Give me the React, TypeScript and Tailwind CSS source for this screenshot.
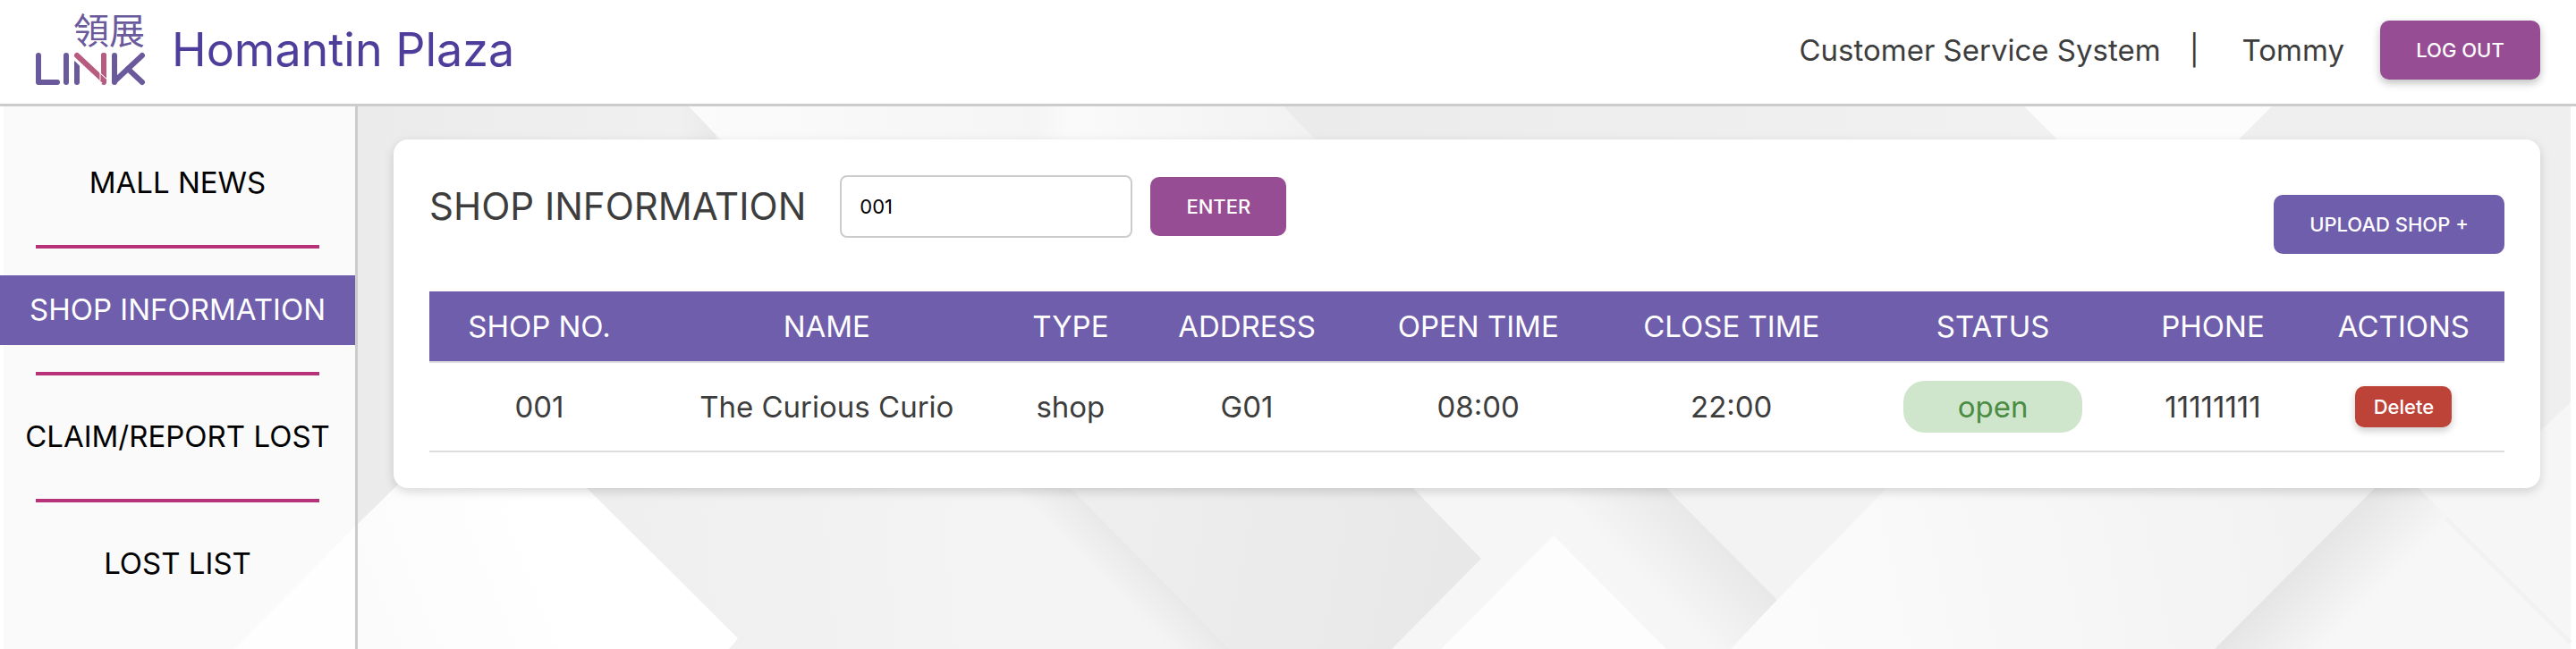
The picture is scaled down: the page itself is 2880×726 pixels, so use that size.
import { useState } from "react";

type Shop = {
  no: string;
  name: string;
  type: string;
  address: string;
  open: string;
  close: string;
  status: string;
  phone: string;
};

const navItems = ["MALL NEWS", "SHOP INFORMATION", "CLAIM/REPORT LOST", "LOST LIST"];

const columns = [
  { label: "SHOP NO.", width: "w-[10.6%]" },
  { label: "NAME", width: "w-[17.1%]" },
  { label: "TYPE", width: "w-[6.4%]" },
  { label: "ADDRESS", width: "w-[10.6%]" },
  { label: "OPEN TIME", width: "w-[11.7%]" },
  { label: "CLOSE TIME", width: "w-[12.7%]" },
  { label: "STATUS", width: "w-[12.5%]" },
  { label: "PHONE", width: "w-[8.7%]" },
  { label: "ACTIONS", width: "w-[9.7%]" },
];

const shops: Shop[] = [
  {
    no: "001",
    name: "The Curious Curio",
    type: "shop",
    address: "G01",
    open: "08:00",
    close: "22:00",
    status: "open",
    phone: "11111111",
  },
];

function LinkLogo() {
  return (
    <svg width="130" height="108" viewBox="0 -12 130 108" role="img" aria-label="領展 LINK" className="shrink-0">
      <text
        x="44"
        y="35"
        fontSize="40"
        fill="#6a5a9c"
        fontFamily="'Noto Sans CJK TC', sans-serif"
        lang="zh-Hant"
      >
        領展
      </text>
      <g stroke="#6a5a9c" strokeWidth="6" strokeLinecap="round" strokeLinejoin="round" fill="none">
        <polyline points="5,48 5,78 26,78" />
        <line x1="36" y1="48" x2="36" y2="78" />
        <line x1="48" y1="56" x2="48" y2="78" />
        <line x1="90" y1="48" x2="90" y2="78" />
        <line x1="121" y1="48" x2="90" y2="77" />
        <line x1="105" y1="63" x2="121" y2="78" />
      </g>
      <line x1="46" y1="49" x2="76" y2="79" stroke="#ffffff" strokeWidth="8" />
      <line x1="78" y1="48" x2="78" y2="78" stroke="#b85c7f" strokeWidth="6" strokeLinecap="round" />
      <line x1="48" y1="48" x2="78" y2="77" stroke="#ffffff" strokeWidth="8" />
      <line x1="48" y1="48" x2="78" y2="76" stroke="#b85c7f" strokeWidth="6" strokeLinecap="round" />
      <line x1="78" y1="48" x2="78" y2="66" stroke="#b85c7f" strokeWidth="6" strokeLinecap="round" />
      <line x1="74" y1="67" x2="74" y2="76" stroke="#ffffff" strokeWidth="1" />
      <line x1="73" y1="67" x2="82" y2="75" stroke="#ffffff" strokeWidth="1" />
    </svg>
  );
}

function Backdrop() {
  return (
    <svg
      aria-hidden="true"
      className="absolute inset-0 h-full w-full"
      viewBox="0 119 2880 607"
      preserveAspectRatio="none"
    >
      <defs>
        <linearGradient id="topLight" x1="0" x2="1" y1="0" y2="0">
          <stop offset="0" stopColor="#fbfbfb" />
          <stop offset="0.55" stopColor="#f5f5f5" />
          <stop offset="0.6" stopColor="#fafafa" />
          <stop offset="1" stopColor="#f1f1f1" />
        </linearGradient>
        <linearGradient id="topGrey" x1="0" x2="1" y1="0" y2="0">
          <stop offset="0" stopColor="#ebebeb" />
          <stop offset="1" stopColor="#f1f1f1" />
        </linearGradient>
        <linearGradient id="leftGrey" x1="0" x2="1" y1="0" y2="0">
          <stop offset="0" stopColor="#ebebeb" />
          <stop offset="0.9" stopColor="#f0f0f0" />
          <stop offset="1" stopColor="#e9e9e9" />
        </linearGradient>
        <linearGradient id="midGrey" gradientUnits="userSpaceOnUse" x1="700" y1="640" x2="1140" y2="600">
          <stop offset="0" stopColor="#efefef" />
          <stop offset="1" stopColor="#f4f4f4" />
        </linearGradient>
        <linearGradient id="shadeA" gradientUnits="userSpaceOnUse" x1="1252" y1="670" x2="1286" y2="636">
          <stop offset="0" stopColor="#e9e9e9" stopOpacity="0" />
          <stop offset="1" stopColor="#e9e9e9" />
        </linearGradient>
        <linearGradient id="darkA" gradientUnits="userSpaceOnUse" x1="1230" y1="560" x2="1640" y2="640">
          <stop offset="0" stopColor="#eeeeee" />
          <stop offset="1" stopColor="#e8e8e8" />
        </linearGradient>
        <linearGradient id="shadeB" gradientUnits="userSpaceOnUse" x1="1860" y1="673" x2="1925" y2="608">
          <stop offset="0" stopColor="#f6f6f6" />
          <stop offset="1" stopColor="#e8e8e8" />
        </linearGradient>
        <linearGradient id="panel" gradientUnits="userSpaceOnUse" x1="2000" y1="680" x2="2560" y2="560">
          <stop offset="0" stopColor="#fbfbfb" />
          <stop offset="1" stopColor="#f2f2f2" />
        </linearGradient>
        <linearGradient id="shadeC" gradientUnits="userSpaceOnUse" x1="2566" y1="636" x2="2626" y2="696">
          <stop offset="0" stopColor="#e5e5e5" />
          <stop offset="1" stopColor="#f7f7f7" />
        </linearGradient>
        <linearGradient id="whiteA" gradientUnits="userSpaceOnUse" x1="420" y1="700" x2="620" y2="620">
          <stop offset="0" stopColor="#fbfbfb" />
          <stop offset="1" stopColor="#ffffff" />
        </linearGradient>
      </defs>
      <rect x="4" y="119" width="2870" height="607" fill="#efefef" />
      <rect x="400" y="119" width="400" height="470" fill="url(#leftGrey)" />
      <polygon points="770,119 1435,119 1480,166 815,166" fill="url(#topLight)" />
      <polygon points="1435,119 2263,119 2310,166 1480,166" fill="url(#topGrey)" />
      <polygon points="2263,119 2540,119 2493,166 2310,166" fill="#fcfcfc" />
      <polygon points="650,540 1191,540 1375,726 815,726 825,714" fill="url(#midGrey)" />
      <polygon points="1100,540 1191,540 1375,726 1250,726" fill="url(#shadeA)" />
      <polygon points="1191,540 1574,540 1656,625 1556,726 1375,726" fill="url(#darkA)" />
      <polygon points="400,586 447,540 650,540 825,714 815,726 262,726" fill="url(#whiteA)" />
      <polygon points="1574,540 1857,540 1987,671 1935,726 1556,726 1656,625" fill="#f6f6f6" />
      <polygon points="1690,540 1857,540 1987,671 1935,726 1863,726" fill="url(#shadeB)" />
      <polygon points="1737,599 1863,726 1611,726" fill="#fdfdfd" />
      <polygon points="1857,540 2115,540 1987,671" fill="#f3f3f3" />
      <polygon points="2115,540 2661,540 2476,726 1935,726 1987,671" fill="url(#panel)" />
      <polygon points="2661,540 2698,540 2874,716 2874,726 2476,726" fill="url(#shadeC)" />
      <polygon points="2874,450 2874,716 2698,540 2800,520" fill="#f6f6f6" />
      <line x1="2735" y1="580" x2="2874" y2="719" stroke="#f2f2f2" strokeWidth="5" />
    </svg>
  );
}

export default function App() {
  const [query, setQuery] = useState("001");

  return (
    <div className="flex min-h-screen flex-col bg-white font-['Inter','Liberation_Sans',sans-serif] text-[#3d3d3d]">
      <header className="flex h-[119px] items-center justify-between border-b-3 border-[#cccccc] pr-10 pb-1 pl-[38px]">
        <div className="flex items-center gap-6">
          <LinkLogo />
          <h1 className="text-[52px] leading-none text-[#4f3d9b]">Homantin Plaza</h1>
        </div>
        <div className="flex items-center gap-10">
          <p className="flex items-center gap-8 text-[33px] leading-10">
            <span>Customer Service System</span>
            <span className="mr-4">|</span>
            <span>Tommy</span>
          </p>
          <button
            type="button"
            className="h-[66px] w-[179px] rounded-[10px] bg-[#974d94] text-[22px] font-medium text-white shadow-[0_4px_10px_rgba(0,0,0,0.25)]"
          >
            LOG OUT
          </button>
        </div>
      </header>

      <div className="relative flex flex-1">
        <Backdrop />
        <nav className="relative w-[400px] shrink-0 border-r-3 border-[#cccccc] bg-white/70 pt-[47px]">
          <ul>
            {navItems.map((item, index) => (
              <li key={item}>
                {index > 0 && <div className="mx-10 my-[30px] h-1 bg-[#b83279]" />}
                <a
                  href="#"
                  aria-current={item === "SHOP INFORMATION" ? "page" : undefined}
                  className={
                    item === "SHOP INFORMATION"
                      ? "flex h-[78px] items-center justify-center bg-[#6f5eab] text-[33px] whitespace-nowrap text-white"
                      : "flex h-[78px] items-center justify-center text-[33px] whitespace-nowrap text-black"
                  }
                >
                  {item}
                </a>
              </li>
            ))}
          </ul>
        </nav>

        <main className="relative flex-1 px-10 py-[37px]">
          <section className="rounded-2xl bg-white p-10 shadow-[0_4px_12px_rgba(0,0,0,0.15)]">
            <div className="mb-[42px] flex h-[88px] items-start justify-between">
              <form className="flex items-center gap-5" onSubmit={(event) => event.preventDefault()}>
                <h2 className="mr-[18px] text-[42px] leading-none whitespace-nowrap">SHOP INFORMATION</h2>
                <input
                  aria-label="Shop number"
                  value={query}
                  onChange={(event) => setQuery(event.target.value)}
                  className="h-[70px] w-[327px] rounded-lg border-2 border-[#cccccc] bg-white px-5 text-[22px] text-black"
                />
                <button
                  type="submit"
                  className="h-[66px] w-[152px] rounded-[10px] bg-[#974d94] text-[22px] font-medium text-white"
                >
                  ENTER
                </button>
              </form>
              <button
                type="button"
                className="h-[66px] w-[258px] self-end rounded-[10px] bg-[#6f5eab] text-[22px] font-medium text-white"
              >
                UPLOAD SHOP +
              </button>
            </div>

            <table className="w-full table-fixed border-separate border-spacing-0 text-center text-[33px] leading-10">
              <thead>
                <tr className="bg-[#6f5eab] text-white">
                  {columns.map((column) => (
                    <th
                      key={column.label}
                      scope="col"
                      className={`${column.width} h-20 border-b-2 border-[#dddddd] p-0 font-normal whitespace-nowrap`}
                    >
                      {column.label}
                    </th>
                  ))}
                </tr>
              </thead>
              <tbody className="[&_td]:h-[100px] [&_td]:border-b-2 [&_td]:border-[#dddddd] [&_td]:p-0">
                {shops.map((shop) => (
                  <tr key={shop.no}>
                    <td>{shop.no}</td>
                    <td>{shop.name}</td>
                    <td>{shop.type}</td>
                    <td>{shop.address}</td>
                    <td>{shop.open}</td>
                    <td>{shop.close}</td>
                    <td>
                      <span className="mx-auto flex h-[58px] w-[200px] items-center justify-center rounded-3xl bg-[#cfe5cc] text-[#4b8c43]">
                        {shop.status}
                      </span>
                    </td>
                    <td>{shop.phone}</td>
                    <td>
                      <button
                        type="button"
                        className="mx-auto block h-[46px] w-[108px] rounded-[10px] bg-[#bd4339] text-[22px] leading-none font-medium text-white shadow-[0_4px_8px_rgba(0,0,0,0.2)]"
                      >
                        Delete
                      </button>
                    </td>
                  </tr>
                ))}
              </tbody>
            </table>
          </section>
        </main>
      </div>
    </div>
  );
}
